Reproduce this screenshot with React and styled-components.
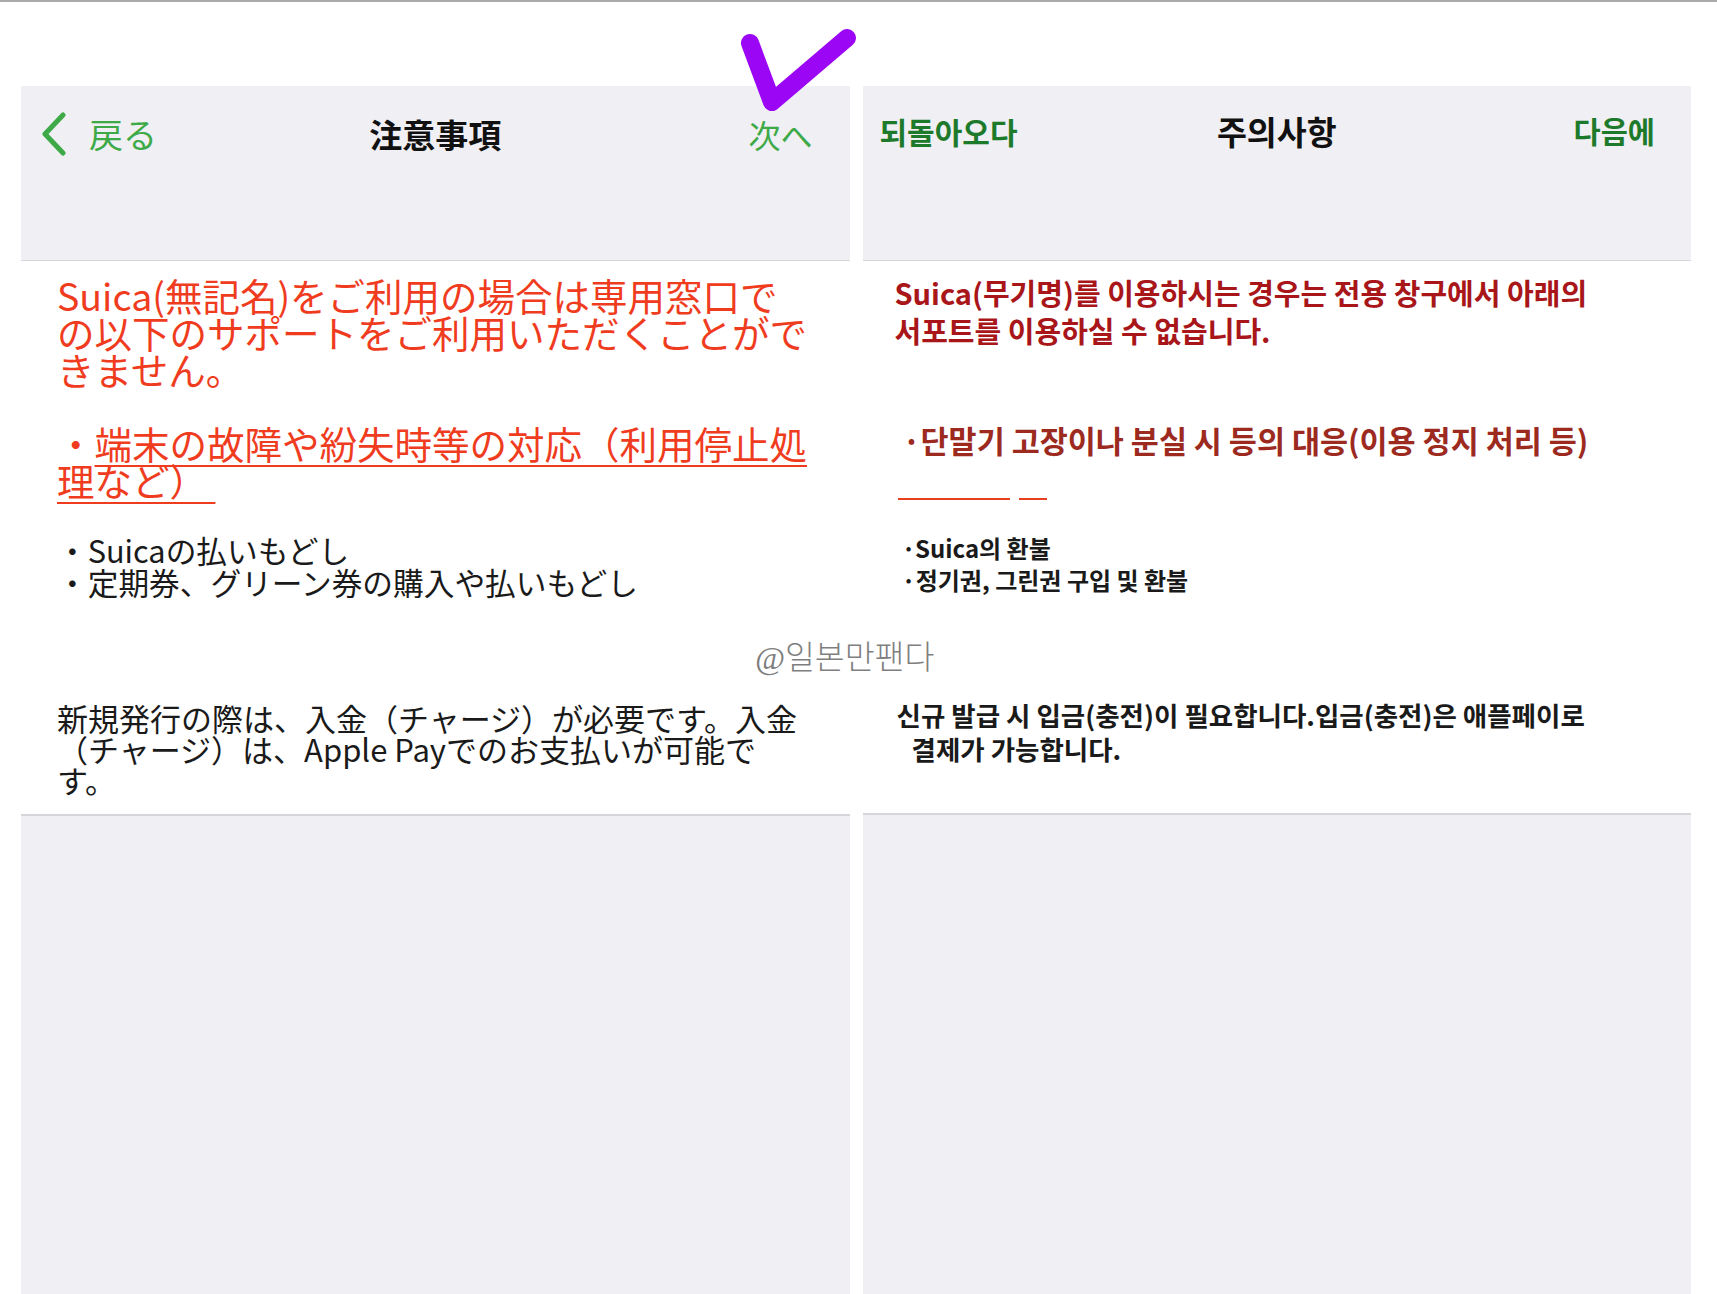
import styled, { createGlobalStyle } from 'styled-components';

const colors = {
  sheet: '#efeff4',
  rule: '#d6d6da',
  greenLight: '#3daa47',
  greenDark: '#1e7a2b',
  redJp: '#f03c1e',
  redKr: '#a8161a',
  brownKr: '#9c2a1f',
  ink: '#1a1a1a',
  violet: '#9b06f5',
};

const GlobalStyle = createGlobalStyle`
  html, body {
    margin: 0;
    padding: 0;
    background: #ffffff;
  }
  body {
    font-family: 'Noto Sans CJK JP', 'Noto Sans', sans-serif;
  }
`;

const Page = styled.div`
  position: relative;
  display: flex;
  flex-direction: column;
  min-height: 100vh;
  overflow: hidden;
`;

const TopRule = styled.div`
  height: 2px;
  background: #a9a9a9;
`;

const Panels = styled.div`
  flex: 1;
  display: flex;
  gap: 13px;
  margin-top: 84px;
  padding: 0 26px 0 21px;
`;

const Panel = styled.section`
  flex: 1;
  display: flex;
  flex-direction: column;
  background: ${colors.sheet};
  font-family: ${(p) =>
    p.$lang === 'kr'
      ? "'Noto Sans CJK KR', 'Noto Sans', sans-serif"
      : "'Noto Sans CJK JP', 'Noto Sans', sans-serif"};
`;

const Header = styled.header`
  height: 175px;
  border-bottom: 1px solid ${colors.rule};
  box-sizing: border-box;
`;

const NavRow = styled.nav`
  display: grid;
  grid-template-columns: 1fr auto 1fr;
  align-items: center;
  height: ${(p) => p.$height}px;
`;

const NavLink = styled.span`
  display: flex;
  align-items: center;
  gap: 22px;
  justify-self: ${(p) => (p.$end ? 'end' : 'start')};
  margin: ${(p) => (p.$end ? `0 ${p.$inset}px 0 0` : `0 0 0 ${p.$inset}px`)};
  color: ${(p) => p.$color};
  font-size: ${(p) => p.$size}px;
  font-weight: ${(p) => p.$weight || 400};
  line-height: 1;
`;

const NavTitle = styled.h1`
  margin: 0;
  color: #111;
  font-size: ${(p) => p.$size}px;
  font-weight: 700;
  line-height: 1;
`;

const Content = styled.div`
  display: flex;
  flex-direction: column;
  background: #ffffff;
  padding: ${(p) => p.$pad};
  border-bottom: 2px solid ${colors.rule};
`;

const Para = styled.p`
  margin: ${(p) => p.$gap || 0}px 0 0 ${(p) => p.$indent || 0}px;
  white-space: nowrap;
  color: ${(p) => p.$color || colors.ink};
  font-size: ${(p) => p.$size}px;
  line-height: ${(p) => p.$line}px;
  font-weight: ${(p) => p.$weight || 400};
`;

const Underlined = styled.span`
  text-decoration: underline;
  text-decoration-thickness: 2px;
  text-underline-offset: 6px;
`;

const Indent = styled.span`
  display: inline-block;
  padding-left: ${(p) => p.$by}px;
`;

const StubRow = styled.div`
  display: flex;
  gap: 9px;
  margin-top: 39px;
  margin-left: 3px;
`;

const Stub = styled.span`
  display: block;
  width: ${(p) => p.$w}px;
  height: 2px;
  background: #e8401f;
`;

const Filler = styled.div`
  flex: 1;
`;

const Watermark = styled.div`
  position: absolute;
  left: 755px;
  top: 635px;
  color: #7f7f7f;
  font-family: 'Noto Sans CJK KR', sans-serif;
  font-size: 32.5px;
  font-weight: 300;
  line-height: 40px;
  span {
    font-family: 'Liberation Serif', serif;
    font-style: italic;
  }
`;

const CheckMark = styled.svg`
  position: absolute;
  left: 735px;
  top: 25px;
`;

function Chevron({ color }) {
  return (
    <svg width="26" height="44" viewBox="0 0 26 44" fill="none">
      <polyline
        points="22,3 4,22 22,41"
        stroke={color}
        strokeWidth="5"
        strokeLinecap="round"
        strokeLinejoin="round"
      />
    </svg>
  );
}

function JapanesePanel() {
  return (
    <Panel $lang="jp">
      <Header>
        <NavRow $height={96}>
          <NavLink $inset={20} $color={colors.greenLight} $size={34}>
            <Chevron color={colors.greenLight} />
            戻る
          </NavLink>
          <NavTitle $size={33}>注意事項</NavTitle>
          <NavLink $end $inset={37} $color={colors.greenLight} $size={32}>
            次へ
          </NavLink>
        </NavRow>
      </Header>
      <Content $pad="15px 20px 19px 36px">
        <Para $color={colors.redJp} $size={37.5} $line={37}>
          Suica(無記名)をご利用の場合は専用窓口で
          <br />
          の以下のサポートをご利用いただくことがで
          <br />
          きません。
        </Para>
        <Para $color={colors.redJp} $size={37.5} $line={37} $gap={37}>
          ・
          <Underlined>
            端末の故障や紛失時等の対応（利用停止処
            <br />
            理など）&nbsp;
          </Underlined>
        </Para>
        <Para $size={30.7} $line={32} $gap={36}>
          ・Suicaの払いもどし
          <br />
          ・定期券、グリーン券の購入や払いもどし
        </Para>
        <Para $size={31} $line={31} $gap={104}>
          新規発行の際は、入金（チャージ）が必要です。入金
          <br />
          （チャージ）は、Apple Payでのお支払いが可能で
          <br />
          す。
        </Para>
      </Content>
      <Filler />
    </Panel>
  );
}

function KoreanPanel() {
  return (
    <Panel $lang="kr">
      <Header>
        <NavRow $height={90}>
          <NavLink $inset={17} $color={colors.greenDark} $size={30} $weight={700}>
            되돌아오다
          </NavLink>
          <NavTitle $size={32.5}>주의사항</NavTitle>
          <NavLink $end $inset={36} $color={colors.greenDark} $size={29.5} $weight={700}>
            다음에
          </NavLink>
        </NavRow>
      </Header>
      <Content $pad="12px 20px 47px 32px">
        <Para $color={colors.redKr} $size={29} $line={38} $weight={700}>
          Suica(무기명)를 이용하시는 경우는 전용 창구에서 아래의
          <br />
          서포트를 이용하실 수 없습니다.
        </Para>
        <Para $color={colors.brownKr} $size={30.5} $line={38} $weight={700} $gap={72} $indent={8}>
          ·단말기 고장이나 분실 시 등의 대응(이용 정지 처리 등)
        </Para>
        <StubRow>
          <Stub $w={112} />
          <Stub $w={28} />
        </StubRow>
        <Para $size={24} $line={32} $weight={700} $gap={32} $indent={7}>
          ·Suica의 환불
          <br />
          ·정기권, 그린권 구입 및 환불
        </Para>
        <Para $size={26.5} $line={34} $weight={700} $gap={102} $indent={2}>
          신규 발급 시 입금(충전)이 필요합니다.입금(충전)은 애플페이로
          <br />
          <Indent $by={15}>결제가 가능합니다.</Indent>
        </Para>
      </Content>
      <Filler />
    </Panel>
  );
}

export default function App() {
  return (
    <>
      <GlobalStyle />
      <Page>
        <TopRule />
        <Panels>
          <JapanesePanel />
          <KoreanPanel />
        </Panels>
        <Watermark>
          <span>@</span>일본만팬다
        </Watermark>
        <CheckMark width="125" height="95" viewBox="0 0 125 95" fill="none">
          <polyline
            points="15,18 37,77 112,13"
            stroke={colors.violet}
            strokeWidth="18"
            strokeLinecap="round"
            strokeLinejoin="round"
          />
        </CheckMark>
      </Page>
    </>
  );
}
